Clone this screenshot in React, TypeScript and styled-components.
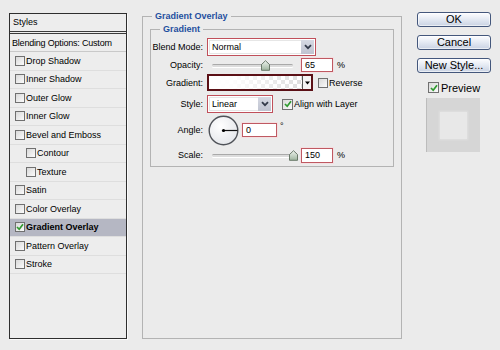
import React from "react";
import styled, { createGlobalStyle } from "styled-components";

const Global = createGlobalStyle`
  html, body { margin: 0; padding: 0; background: #ebebeb; }
  body { font-family: "Liberation Sans", Arial, sans-serif; color: #000; }
  * { box-sizing: border-box; }
`;

const Page = styled.div`
  display: flex;
  align-items: flex-start;
  width: 500px;
  height: 350px;
  padding: 10px 0 0 9px;
  overflow: hidden;
`;

/* ---------- left styles list ---------- */
const StylesPanel = styled.div`
  width: 118px;
  height: 326px;
  margin-top: 3px;
  border: 1px solid #2e2e2e;
  box-shadow: 1px 1px 0 #fafafa;
  background: #ededed;
  display: flex;
  flex-direction: column;
  flex: none;
`;

const PanelHeader = styled.div`
  height: 20px;
  padding: 0 0 2px 3px;
  border-bottom: 3px double #3a3a3a;
  display: flex;
  align-items: center;
  font-size: 9px;
`;

const BlendingRow = styled.div`
  height: 18px;
  padding-left: 2px;
  border-bottom: 1px solid #c9c9c9;
  display: flex;
  align-items: center;
  font-size: 9px;
  letter-spacing: -0.2px;
`;

const StyleRow = styled.div<{ $indent?: boolean; $active?: boolean }>`
  height: 18.5px;
  flex: none;
  border-bottom: 1px solid #dedede;
  display: flex;
  align-items: center;
  gap: 1px;
  padding-left: ${(p) => (p.$indent ? 16 : 5)}px;
  background: ${(p) => (p.$active ? "#b5b7c3" : "transparent")};
  font-size: 9px;
  font-weight: ${(p) => (p.$active ? 700 : 400)};
  white-space: nowrap;
`;

const Box = styled.span<{ $size?: number }>`
  width: ${(p) => p.$size ?? 10}px;
  height: ${(p) => p.$size ?? 10}px;
  border: 1px solid #707070;
  background: linear-gradient(135deg, #d9d9d9, #fbfbfb);
  display: inline-flex;
  align-items: center;
  justify-content: center;
  flex: none;
`;

function Check({ checked, size }: { checked?: boolean; size?: number }) {
  return (
    <Box $size={size}>
      {checked && (
        <svg width="8" height="8" viewBox="0 0 8 8">
          <path d="M1 4 L3.2 6.3 L7 1.3" fill="none" stroke="#2f9a2f" strokeWidth="1.7" />
        </svg>
      )}
    </Box>
  );
}

/* ---------- centre group boxes ---------- */
const GroupBox = styled.fieldset<{ $outer?: boolean }>`
  margin: 0;
  min-width: 0;
  border: 1px solid #b3b3b3;
  ${(p) =>
    p.$outer
      ? `width: 260px; height: 329px; padding: 1px 7px 0 7px; margin-left: 15px; flex: none;`
      : `width: 244px; padding: 3px 0 3px 0;`}
`;

const GroupTitle = styled.legend<{ $offset: number }>`
  margin-left: ${(p) => p.$offset}px;
  padding: 0 3px;
  font: bold 9px/12px "Liberation Sans", Arial, sans-serif;
  color: #1f4f9f;
`;

const Rows = styled.div`
  display: flex;
  flex-direction: column;
  gap: 2px;
`;

const Row = styled.div<{ $h: number; $mt?: number }>`
  height: ${(p) => p.$h}px;
  margin-top: ${(p) => p.$mt ?? 0}px;
  display: flex;
  align-items: center;
  font-size: 9px;
  white-space: nowrap;
`;

const Label = styled.span`
  width: 52px;
  margin-right: 4px;
  text-align: right;
  font-size: 9px;
  flex: none;
`;

const Select = styled.div<{ $w: number }>`
  width: ${(p) => p.$w}px;
  height: 18px;
  border: 1px solid #c04f5a;
  background: #fff;
  padding: 1px;
  display: flex;
  flex: none;
`;

const SelectValue = styled.span`
  flex: 1;
  border: 1px solid #e6e6e6;
  border-right: none;
  padding-left: 2px;
  display: flex;
  align-items: center;
  font-size: 9px;
`;

const SelectArrow = styled.span`
  width: 13px;
  background: linear-gradient(#d6d9e3, #bfc3d0);
  display: flex;
  align-items: center;
  justify-content: center;
`;

const NumField = styled.div<{ $w: number; $h: number }>`
  width: ${(p) => p.$w}px;
  height: ${(p) => p.$h}px;
  border: 1px solid #bf5962;
  box-shadow: 0 0 0 1px #f4dfe1;
  background: #fff;
  padding-left: 3px;
  display: flex;
  align-items: center;
  font-size: 9px;
  flex: none;
`;

const Unit = styled.span<{ $ml?: number; $up?: boolean }>`
  margin-left: ${(p) => p.$ml ?? 4}px;
  font-size: 9px;
  align-self: ${(p) => (p.$up ? "flex-start" : "center")};
  margin-top: ${(p) => (p.$up ? 6 : 0)}px;
`;

const SliderWrap = styled.div`
  position: relative;
  width: 94px;
  height: 14px;
  padding-left: 5px;
  display: flex;
  align-items: center;
  flex: none;
`;

const Track = styled.div`
  width: 81px;
  height: 3px;
  border-radius: 2px;
  border-top: 1px solid #a9a9a9;
  background: #dcdcdc;
  box-shadow: 0 1px 0 #fff;
`;

const Thumb = styled.svg`
  position: absolute;
  top: 2px;
  margin-left: -4px;
`;

function Slider({ pct }: { pct: number }) {
  return (
    <SliderWrap>
      <Track />
      <Thumb width="9" height="11" viewBox="0 0 9 11" style={{ left: 5 + (81 * pct) / 100 }}>
        <defs>
          <linearGradient id="tg" x1="0" y1="0" x2="0" y2="1">
            <stop offset="0" stopColor="#eef3ee" />
            <stop offset="1" stopColor="#9fb59f" />
          </linearGradient>
        </defs>
        <path d="M0.5 4.5 L4.5 0.7 L8.5 4.5 L8.5 10.3 L0.5 10.3 Z" fill="url(#tg)" stroke="#5e6e5e" strokeWidth="0.9" />
      </Thumb>
    </SliderWrap>
  );
}

const GradientBox = styled.div`
  width: 106px;
  height: 17px;
  border: 2px solid #5b1016;
  display: flex;
  flex: none;
`;

const GradientFill = styled.div`
  flex: 1;
  background-image: linear-gradient(to right, #fff 0%, rgba(255, 255, 255, 0.95) 25%, rgba(255, 255, 255, 0) 100%),
    conic-gradient(#dedede 25%, #fff 0 50%, #dedede 0 75%, #fff 0);
  background-size: 100% 100%, 8px 8px;
`;

const GradientArrow = styled.div`
  width: 9px;
  border-left: 1px solid #555;
  background: #f4f4f4;
  display: flex;
  align-items: center;
  justify-content: center;
`;

const InlineCheck = styled.span<{ $ml: number }>`
  margin-left: ${(p) => p.$ml}px;
  display: flex;
  align-items: center;
  gap: 1px;
  font-size: 9px;
`;

const Dial = styled.svg`
  margin-left: 1px;
  flex: none;
`;

/* ---------- right column ---------- */
const Side = styled.div`
  margin-left: 15px;
  margin-top: 2px;
  width: 74px;
  display: flex;
  flex-direction: column;
  flex: none;
`;

const ButtonStack = styled.div`
  display: flex;
  flex-direction: column;
  gap: 8px;
`;

const Btn = styled.button`
  width: 74px;
  height: 15px;
  padding: 0;
  border: 1px solid #44577c;
  border-radius: 3px;
  background: linear-gradient(#fdfdff 0%, #e6ebf4 45%, #c9d2e3 100%);
  box-shadow: inset 0 0 0 1px rgba(255, 255, 255, 0.6);
  font: 11px/13px "Liberation Sans", Arial, sans-serif;
  color: #000;
`;

const PreviewRow = styled.div`
  margin-top: 9px;
  height: 11px;
  padding-left: 11px;
  display: flex;
  align-items: center;
  gap: 2px;
  font-size: 11px;
`;

const Swatch = styled.div`
  margin: 5px 0 0 9px;
  width: 54px;
  height: 54px;
  background: #d6d6d6;
  border-left: 1px solid #bcbcbc;
  display: flex;
  align-items: center;
  justify-content: center;
`;

const SwatchInner = styled.div`
  width: 27px;
  height: 27px;
  background: #e8e8e8;
  box-shadow: 0 0 2px 1px #e0e0e0;
`;

function Chevron() {
  return (
    <svg width="8" height="6" viewBox="0 0 8 6">
      <path d="M1 1.2 L4 4.2 L7 1.2" fill="none" stroke="#333a4a" strokeWidth="1.8" />
    </svg>
  );
}

const styleItems: { name: string; indent?: boolean; checked?: boolean }[] = [
  { name: "Drop Shadow" },
  { name: "Inner Shadow" },
  { name: "Outer Glow" },
  { name: "Inner Glow" },
  { name: "Bevel and Emboss" },
  { name: "Contour", indent: true },
  { name: "Texture", indent: true },
  { name: "Satin" },
  { name: "Color Overlay" },
  { name: "Gradient Overlay", checked: true },
  { name: "Pattern Overlay" },
  { name: "Stroke" },
];

export default function App() {
  return (
    <>
      <Global />
      <Page>
        <StylesPanel>
          <PanelHeader>Styles</PanelHeader>
          <BlendingRow>Blending Options: Custom</BlendingRow>
          {styleItems.map((s) => (
            <StyleRow key={s.name} $indent={s.indent} $active={s.checked}>
              <Check checked={s.checked} />
              <span>{s.name}</span>
            </StyleRow>
          ))}
        </StylesPanel>

        <GroupBox $outer>
          <GroupTitle $offset={2}>Gradient Overlay</GroupTitle>
          <GroupBox>
            <GroupTitle $offset={9}>Gradient</GroupTitle>
            <Rows>
              <Row $h={18}>
                <Label>Blend Mode:</Label>
                <Select $w={109}>
                  <SelectValue>Normal</SelectValue>
                  <SelectArrow>
                    <Chevron />
                  </SelectArrow>
                </Select>
              </Row>
              <Row $h={14}>
                <Label>Opacity:</Label>
                <Slider pct={65} />
                <NumField $w={32} $h={14}>65</NumField>
                <Unit>%</Unit>
              </Row>
              <Row $h={17}>
                <Label>Gradient:</Label>
                <GradientBox>
                  <GradientFill />
                  <GradientArrow>
                    <svg width="5" height="4" viewBox="0 0 5 4">
                      <path d="M0 0.5 H5 L2.5 3.5 Z" fill="#000" />
                    </svg>
                  </GradientArrow>
                </GradientBox>
                <InlineCheck $ml={5}>
                  <Check />
                  <span>Reverse</span>
                </InlineCheck>
              </Row>
              <Row $h={18} $mt={2}>
                <Label>Style:</Label>
                <Select $w={66}>
                  <SelectValue>Linear</SelectValue>
                  <SelectArrow>
                    <Chevron />
                  </SelectArrow>
                </Select>
                <InlineCheck $ml={9}>
                  <Check checked size={11} />
                  <span>Align with Layer</span>
                </InlineCheck>
              </Row>
              <Row $h={30}>
                <Label>Angle:</Label>
                <Dial width="31" height="31" viewBox="0 0 31 31">
                  <defs>
                    <radialGradient id="dg" cx="0.4" cy="0.35" r="0.7">
                      <stop offset="0" stopColor="#ffffff" />
                      <stop offset="1" stopColor="#e4e6ea" />
                    </radialGradient>
                  </defs>
                  <circle cx="15.5" cy="15.5" r="14.3" fill="url(#dg)" stroke="#4f5258" strokeWidth="1.4" />
                  <line x1="15.5" y1="15.5" x2="29.5" y2="15.5" stroke="#111" strokeWidth="1.2" />
                  <circle cx="15.5" cy="15.5" r="1.6" fill="#000" />
                </Dial>
                <InlineCheck $ml={3}>
                  <NumField $w={35} $h={14}>0</NumField>
                </InlineCheck>
                <Unit $ml={3} $up>°</Unit>
              </Row>
              <Row $h={16}>
                <Label>Scale:</Label>
                <Slider pct={100} />
                <NumField $w={32} $h={15}>150</NumField>
                <Unit>%</Unit>
              </Row>
            </Rows>
          </GroupBox>
        </GroupBox>

        <Side>
          <ButtonStack>
            <Btn>OK</Btn>
            <Btn>Cancel</Btn>
            <Btn>New Style...</Btn>
          </ButtonStack>
          <PreviewRow>
            <Check checked size={11} />
            <span>Preview</span>
          </PreviewRow>
          <Swatch>
            <SwatchInner />
          </Swatch>
        </Side>
      </Page>
    </>
  );
}
